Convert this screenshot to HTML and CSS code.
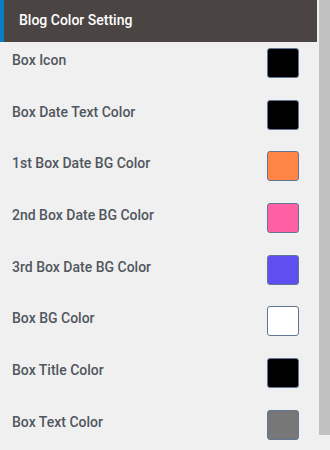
FILE: index.html
```html
<!DOCTYPE html>
<html lang="en">
<head>
<meta charset="utf-8">
<title>Blog Color Setting</title>
<link rel="stylesheet" href="styles.css">
</head>
<body>
<div class="page">
  <div class="panel">
    <div class="panel-header">Blog Color Setting</div>
    <div class="rows">
      <div class="row"><span class="label">Box Icon</span><span class="swatch c-black"></span></div>
      <div class="row"><span class="label">Box Date Text Color</span><span class="swatch c-black"></span></div>
      <div class="row"><span class="label">1st Box Date BG Color</span><span class="swatch c-orange"></span></div>
      <div class="row"><span class="label">2nd Box Date BG Color</span><span class="swatch c-pink"></span></div>
      <div class="row"><span class="label">3rd Box Date BG Color</span><span class="swatch c-purple"></span></div>
      <div class="row"><span class="label">Box BG Color</span><span class="swatch c-white"></span></div>
      <div class="row"><span class="label">Box Title Color</span><span class="swatch c-black"></span></div>
      <div class="row"><span class="label">Box Text Color</span><span class="swatch c-gray"></span></div>
    </div>
  </div>
  <div class="scrollbar"><div class="thumb"></div></div>
</div>
</body>
</html>
```

FILE: styles.css
```css
html, body {
  margin: 0;
  padding: 0;
  background: #f0f0f0;
}
body {
  font-family: Roboto, "Liberation Sans", sans-serif;
  width: 330px;
  height: 450px;
  overflow: hidden;
}
.page {
  display: flex;
  height: 450px;
}
.panel {
  width: 317px;
  flex: none;
}
.panel-header {
  height: 42px;
  box-sizing: border-box;
  background: #4a4543;
  border-left: 4px solid #0c7ac4;
  color: #ffffff;
  font-size: 14px;
  font-weight: 500;
  line-height: 40px;
  padding-left: 15px;
}
.row {
  display: flex;
  justify-content: space-between;
  align-items: flex-start;
  height: 51.7px;
}
.label {
  padding: 8px 0 0 12px;
  font-size: 14px;
  font-weight: 500;
  line-height: 20px;
  color: #50575e;
}
.swatch {
  width: 32px;
  height: 30px;
  box-sizing: border-box;
  margin: 6px 18px 0 0;
  border: 1px solid #5f7795;
  border-radius: 3px;
}
.c-black { background: #000000; }
.c-orange { background: #ff8547; }
.c-pink { background: #ff5fa3; }
.c-purple { background: #5f4ff0; }
.c-white { background: #ffffff; }
.c-gray { background: #777777; }
.scrollbar {
  margin-left: 2px;
  width: 11px;
  flex: none;
}
.thumb {
  height: 435px;
  background: #c1c1c1;
}
```
